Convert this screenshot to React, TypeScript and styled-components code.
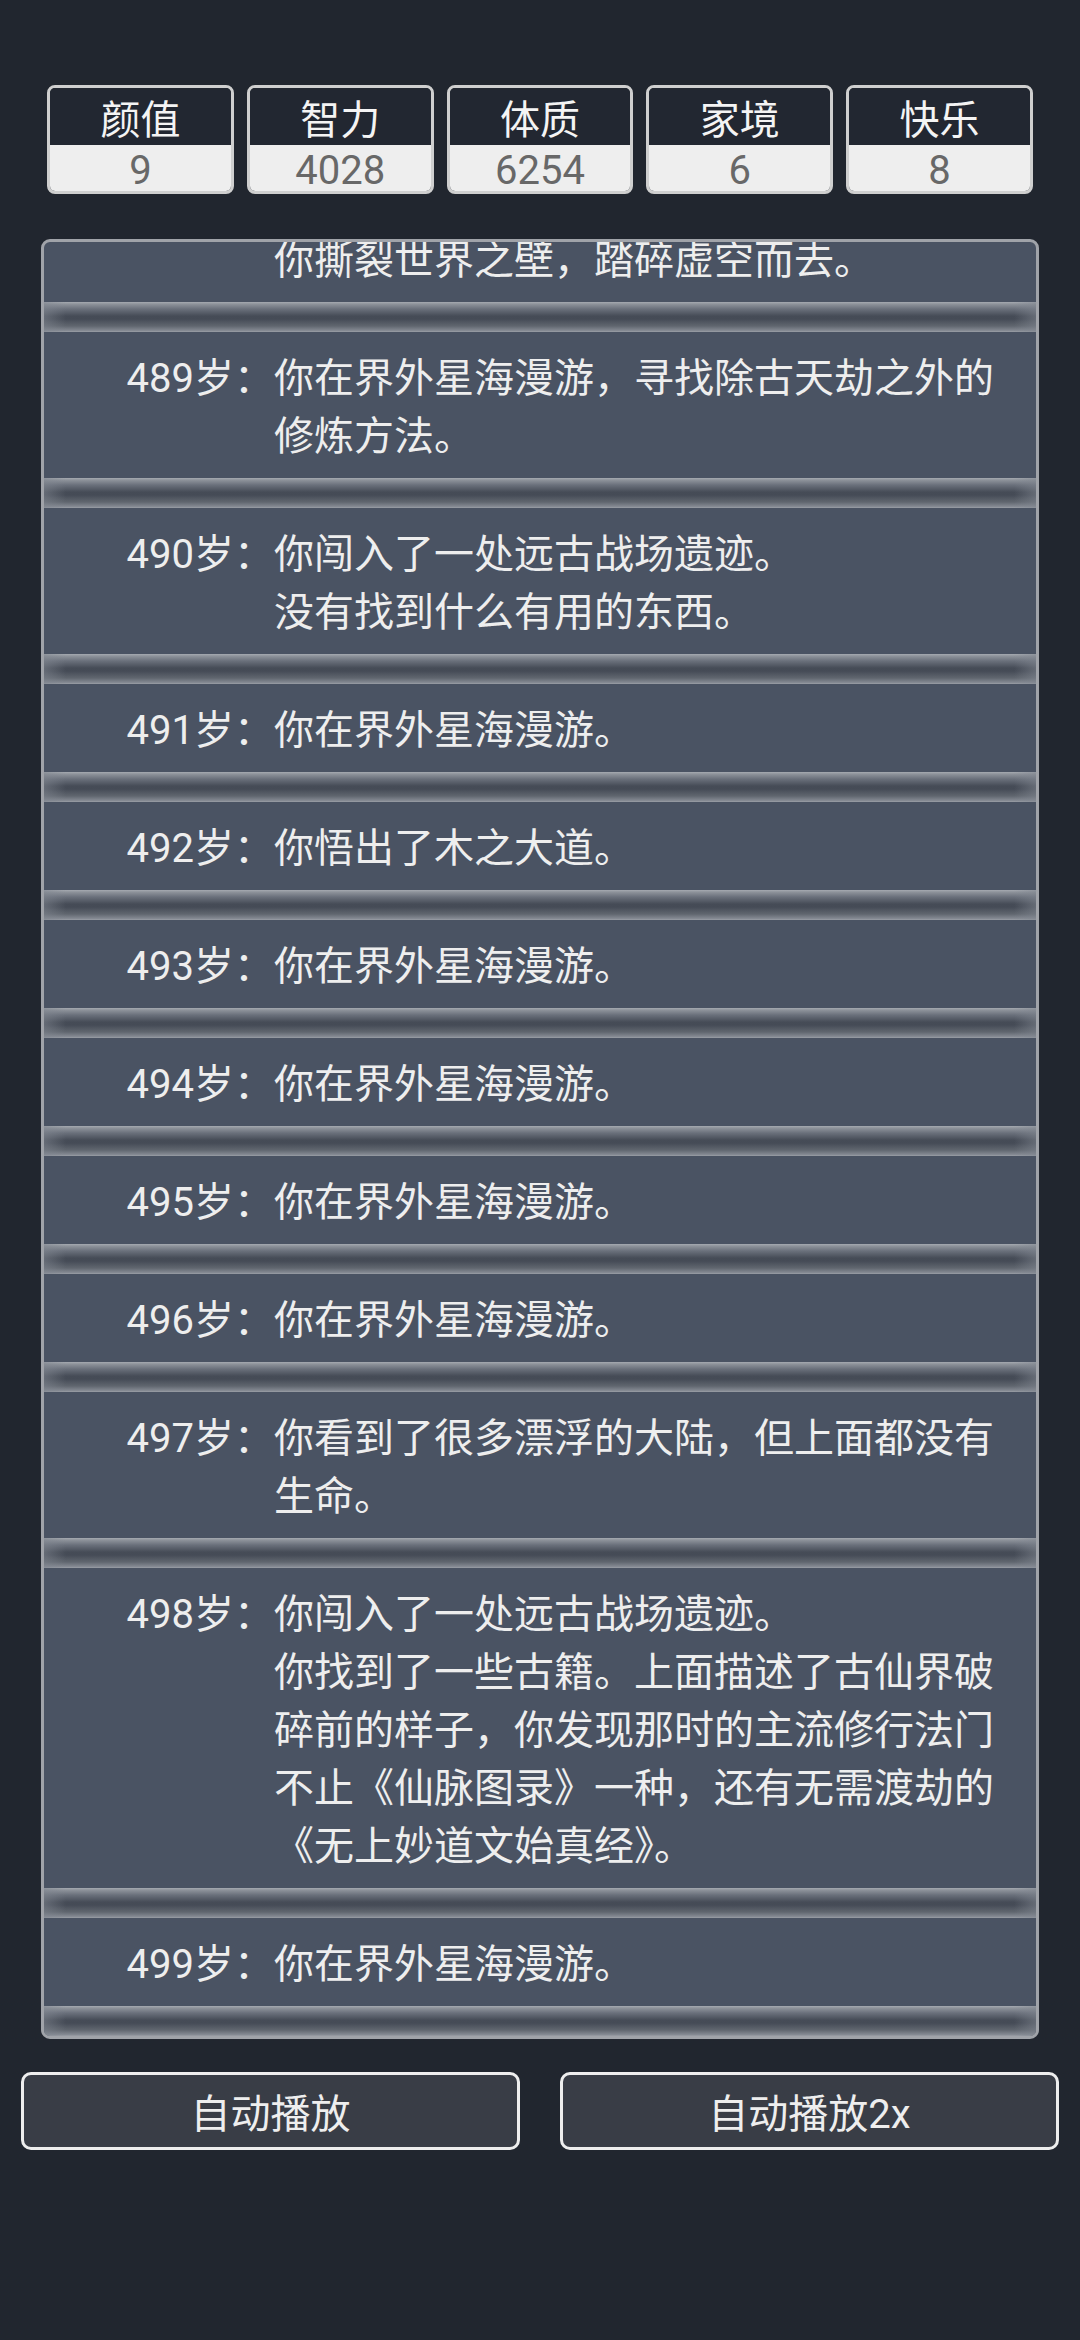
import React from "react";
import styled, { createGlobalStyle } from "styled-components";

const GlobalStyle = createGlobalStyle`
  html, body {
    margin: 0;
    padding: 0;
    background: #21262f;
  }
  body {
    font-family: Roboto, "Noto Sans CJK SC", sans-serif;
  }
`;

const Page = styled.div`
  width: 1080px;
  height: 2340px;
  box-sizing: border-box;
  padding-top: 85px;
  background: #21262f;
  display: flex;
  flex-direction: column;
  align-items: center;
`;

const Stats = styled.div`
  width: 986px;
  display: flex;
  gap: 13px;
`;

const StatBox = styled.div`
  flex: 1;
  display: flex;
  flex-direction: column;
  border: 3px solid #cfcfcf;
  border-radius: 8px;
  overflow: hidden;
`;

const StatLabel = styled.div`
  height: 57px;
  box-sizing: border-box;
  padding-top: 4px;
  line-height: 57px;
  background: #222731;
  color: #f4f4f4;
  font-size: 40px;
  text-align: center;
`;

const StatValue = styled.div`
  height: 46px;
  box-sizing: border-box;
  padding-top: 3px;
  line-height: 46px;
  background: #eeeeee;
  color: #686868;
  font-size: 40px;
  text-align: center;
`;

const Panel = styled.div`
  margin-top: 45px;
  width: 998px;
  height: 1800px;
  box-sizing: border-box;
  border: 3px solid #a0a3a9;
  border-radius: 9px;
  background: #4a5363;
  overflow: hidden;
  display: flex;
  flex-direction: column;
  justify-content: flex-end;
`;

const Entry = styled.div`
  flex-shrink: 0;
  display: flex;
  flex-direction: column;
`;

const Row = styled.div`
  display: grid;
  grid-template-columns: 230px 1fr;
  padding: 18px 30px 12px 0;
  font-size: 40px;
  line-height: 58px;
  color: #eeeeee;
`;

const Age = styled.span`
  text-align: right;
  white-space: nowrap;
`;

const Story = styled.div`
  display: flex;
  flex-direction: column;
`;

const Groove = styled.div`
  height: 30px;
  flex-shrink: 0;
  background:
    linear-gradient(
      to right,
      rgba(128, 134, 144, 0.55),
      rgba(128, 134, 144, 0) 22px,
      rgba(128, 134, 144, 0) calc(100% - 22px),
      rgba(128, 134, 144, 0.55)
    ),
    linear-gradient(
      to bottom,
      #a6aab1 0px,
      #8e939b 2px,
      #6a707b 7px,
      #464c57 14px,
      #454b56 17px,
      #60666f 24px,
      #888d96 29px,
      #9ea2a9 30px
    );
`;

const Buttons = styled.div`
  margin-top: 33px;
  width: 1038px;
  display: flex;
  gap: 40px;
`;

const Button = styled.button`
  flex: 1;
  height: 78px;
  box-sizing: border-box;
  background: #393d46;
  border: 3px solid #eeeeee;
  border-radius: 10px;
  color: #eeeeee;
  font-family: Roboto, "Noto Sans CJK SC", sans-serif;
  font-size: 40px;
  padding: 0;
`;

const stats = [
  { label: "颜值", value: "9" },
  { label: "智力", value: "4028" },
  { label: "体质", value: "6254" },
  { label: "家境", value: "6" },
  { label: "快乐", value: "8" },
];

const entries: { age: string; lines: string[] }[] = [
  { age: "", lines: ["你撕裂世界之壁，踏碎虚空而去。"] },
  { age: "489岁：", lines: ["你在界外星海漫游，寻找除古天劫之外的修炼方法。"] },
  { age: "490岁：", lines: ["你闯入了一处远古战场遗迹。", "没有找到什么有用的东西。"] },
  { age: "491岁：", lines: ["你在界外星海漫游。"] },
  { age: "492岁：", lines: ["你悟出了木之大道。"] },
  { age: "493岁：", lines: ["你在界外星海漫游。"] },
  { age: "494岁：", lines: ["你在界外星海漫游。"] },
  { age: "495岁：", lines: ["你在界外星海漫游。"] },
  { age: "496岁：", lines: ["你在界外星海漫游。"] },
  { age: "497岁：", lines: ["你看到了很多漂浮的大陆，但上面都没有生命。"] },
  {
    age: "498岁：",
    lines: [
      "你闯入了一处远古战场遗迹。",
      "你找到了一些古籍。上面描述了古仙界破碎前的样子，你发现那时的主流修行法门不止《仙脉图录》一种，还有无需渡劫的《无上妙道文始真经》。",
    ],
  },
  { age: "499岁：", lines: ["你在界外星海漫游。"] },
];

export default function App() {
  return (
    <>
      <GlobalStyle />
      <Page>
        <Stats>
          {stats.map((s) => (
            <StatBox key={s.label}>
              <StatLabel>{s.label}</StatLabel>
              <StatValue>{s.value}</StatValue>
            </StatBox>
          ))}
        </Stats>
        <Panel>
          {entries.map((e, i) => (
            <Entry key={i}>
              <Row>
                <Age>{e.age}</Age>
                <Story>
                  {e.lines.map((l, j) => (
                    <span key={j}>{l}</span>
                  ))}
                </Story>
              </Row>
              <Groove />
            </Entry>
          ))}
        </Panel>
        <Buttons>
          <Button>自动播放</Button>
          <Button>自动播放2x</Button>
        </Buttons>
      </Page>
    </>
  );
}
